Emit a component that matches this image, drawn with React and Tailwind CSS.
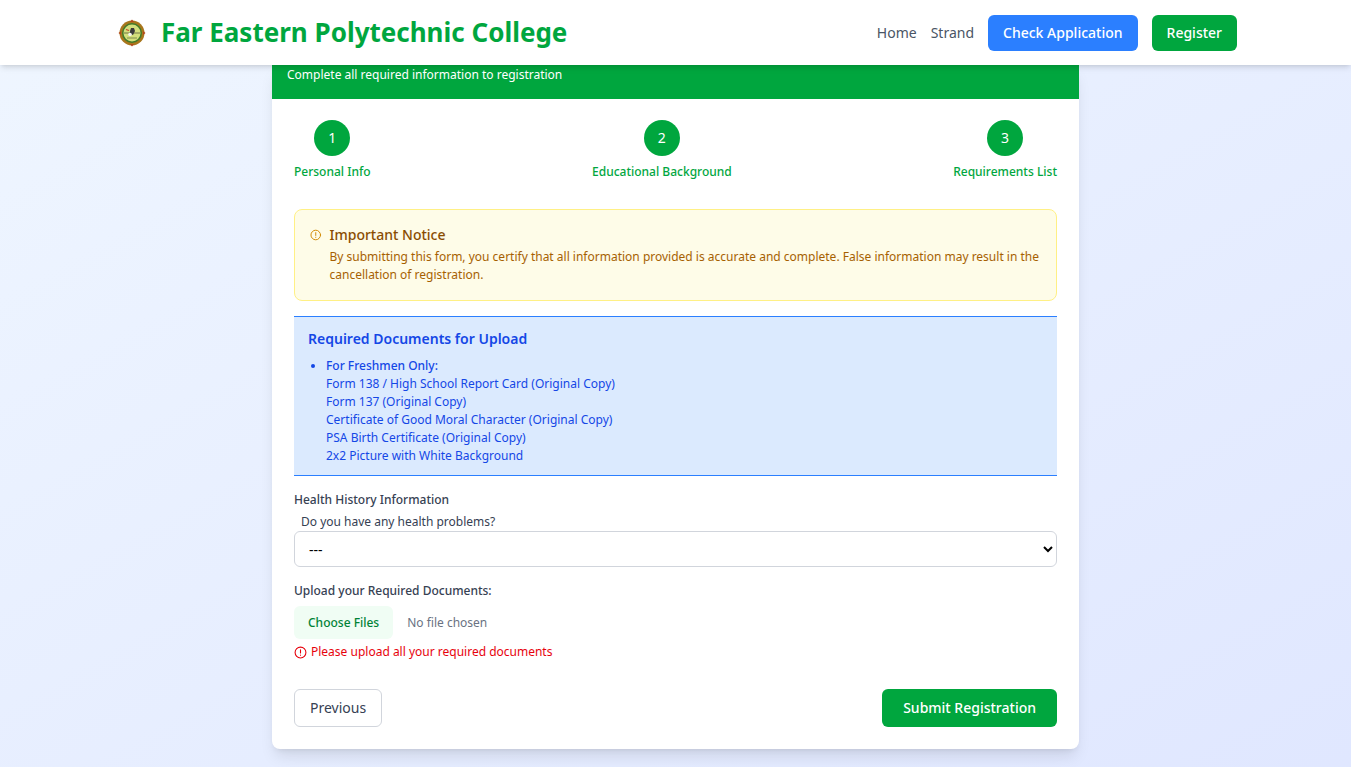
import React from "react";

function Logo() {
  return (
    <svg width="28" height="28" viewBox="0 0 28 28" className="shrink-0">
      <circle cx="14" cy="14" r="12.5" fill="#a8761c" />
      <path d="M14 0.5 L16 3 L12 3 Z M14 27.5 L16 25 L12 25 Z M0.5 14 L3 12 L3 16 Z M27.5 14 L25 12 L25 16 Z" fill="#b3471c" />
      <circle cx="14" cy="14" r="10" fill="#3f7a2a" />
      <circle cx="14" cy="14" r="8.5" fill="#d3df7c" />
      <path d="M6 14 H22" stroke="#5b5b3a" strokeWidth="0.8" />
      <path d="M13 9 l3 0 l1 3 l-2 4 l-3 -1 l0 -3 Z" fill="#3a3a3a" />
      <circle cx="12" cy="15.5" r="1.8" fill="#f4f4ee" />
      <path d="M8 10.5 l3 1" stroke="#c8402a" strokeWidth="1.1" />
      <path d="M9 19 h10" stroke="#8f9a55" strokeWidth="1.2" />
    </svg>
  );
}

function Step({ n, label }) {
  return (
    <div className="flex flex-col items-center">
      <div className="flex h-9 w-9 items-center justify-center rounded-full bg-green-600 text-sm text-white">{n}</div>
      <div className="mt-2 text-xs font-medium text-green-600">{label}</div>
    </div>
  );
}

function AlertIcon({ className }) {
  return (
    <svg viewBox="0 0 24 24" fill="none" stroke="currentColor" strokeWidth="2" strokeLinecap="round" className={className}>
      <circle cx="12" cy="12" r="10" />
      <path d="M12 7v6" />
      <path d="M12 16.5v.5" />
    </svg>
  );
}

export default function App() {
  return (
    <div className="min-h-[767px] bg-gradient-to-br from-blue-50 to-indigo-100 font-['Noto_Sans',sans-serif]">
      <nav className="relative z-10 flex h-[65px] items-center justify-between bg-white pl-[118px] pr-[114px] shadow-md">
        <div className="flex items-center gap-[15px]">
          <Logo />
          <span className="text-[26px] font-bold text-green-600">Far Eastern Polytechnic College</span>
        </div>
        <div className="flex items-center">
          <a className="mr-[14px] text-sm text-gray-600">Home</a>
          <a className="mr-[14px] text-sm text-gray-600">Strand</a>
          <button className="mr-[14px] h-9 rounded-md bg-blue-500 px-[15px] text-sm font-medium text-white">Check Application</button>
          <button className="h-9 rounded-md bg-green-600 px-[15px] text-sm font-medium text-white">Register</button>
        </div>
      </nav>
      <main className="mx-auto w-[807px] overflow-hidden rounded-b-lg bg-white shadow-lg">
        <div className="h-[34px] bg-green-600 px-[15px] pt-[2px] text-xs text-white">Complete all required information to registration</div>
        <div className="px-[22px] pt-[21px] pb-[22px]">
          <div className="flex justify-between">
            <Step n="1" label="Personal Info" />
            <Step n="2" label="Educational Background" />
            <Step n="3" label="Requirements List" />
          </div>
          <div className="mt-[29px] flex h-[92px] gap-[8px] rounded-lg border border-yellow-200 bg-yellow-50 px-[15px] pt-[15px]">
            <AlertIcon className="mt-[3px] h-[14px] w-[14px] text-yellow-600" />
            <div>
              <div className="text-sm font-medium text-yellow-800">Important Notice</div>
              <p className="mt-[3px] text-xs leading-[18px] text-yellow-700">By submitting this form, you certify that all information provided is accurate and complete. False information may result in the cancellation of registration.</p>
            </div>
          </div>
          <div className="mt-[15px] h-[160px] border-y border-blue-500 bg-blue-100 px-[14px] pt-[12px] text-blue-700">
            <h3 className="text-sm leading-[20px] font-semibold">Required Documents for Upload</h3>
            <ul className="mt-[8px] list-disc pl-[18px] text-xs leading-[18px]">
              <li>
                <span className="font-medium">For Freshmen Only:</span>
                <br />Form 138 / High School Report Card (Original Copy)
                <br />Form 137 (Original Copy)
                <br />Certificate of Good Moral Character (Original Copy)
                <br />PSA Birth Certificate (Original Copy)
                <br />2x2 Picture with White Background
              </li>
            </ul>
          </div>
          <div className="mt-[15px] text-xs leading-[18px] font-medium text-gray-700">Health History Information</div>
          <label className="mt-[4px] block pl-[7px] text-xs leading-[18px] text-gray-700">Do you have any health problems?</label>
          <select className="block h-9 w-full rounded-md border border-gray-300 bg-white px-[10px] text-sm text-black">
            <option>---</option>
          </select>
          <div className="mt-[15px] text-xs leading-[18px] font-medium text-gray-700">Upload your Required Documents:</div>
          <input type="file" multiple className="mt-[6px] block w-full text-xs text-gray-500 file:mr-[14px] file:h-[33px] file:rounded-md file:border-0 file:bg-green-50 file:px-[14px] file:text-xs file:font-medium file:text-green-700" />
          <div className="mt-[4px] flex items-center gap-[4px] text-xs leading-[18px] text-red-600">
            <AlertIcon className="h-[13px] w-[13px]" />
            Please upload all your required documents
          </div>
          <div className="mt-[28px] flex justify-between">
            <button className="h-[38px] rounded-md border border-gray-300 bg-white px-[15px] text-sm text-gray-700">Previous</button>
            <button className="h-[38px] rounded-md bg-green-600 px-[21px] text-sm font-medium text-white">Submit Registration</button>
          </div>
        </div>
      </main>
    </div>
  );
}
